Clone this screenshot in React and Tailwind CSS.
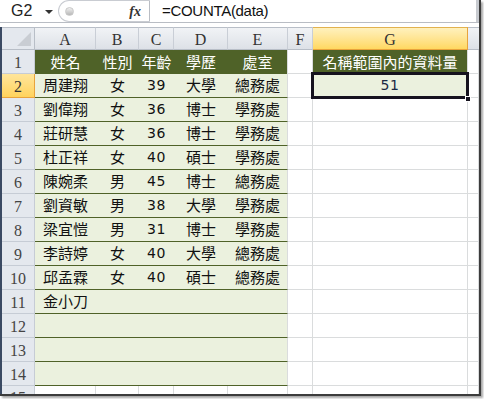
const people = [
  ["周建翔", "女", "39", "大學", "總務處"],
  ["劉偉翔", "女", "36", "博士", "學務處"],
  ["莊研慧", "女", "36", "博士", "學務處"],
  ["杜正祥", "女", "40", "碩士", "學務處"],
  ["陳婉柔", "男", "45", "博士", "總務處"],
  ["劉資敏", "男", "38", "大學", "學務處"],
  ["梁宜愷", "男", "31", "博士", "學務處"],
  ["李詩婷", "女", "40", "大學", "總務處"],
  ["邱孟霖", "女", "40", "碩士", "總務處"],
  ["金小刀", "", "", "", ""],
  ["", "", "", "", ""],
  ["", "", "", "", ""],
  ["", "", "", "", ""],
];

const heads = ["姓名", "性別", "年齡", "學歷", "處室"];
const letters = ["A", "B", "C", "D", "E", "F"];

const cjk = "font-['Noto_Sans_CJK_TC',sans-serif]";
const hdrFont = "font-['Liberation_Serif',serif]";
const numFont = "text-[14px] text-[#1b2a44] font-['DejaVu_Sans',sans-serif] tracking-[0.5px]";

function RowHead({ n, active }) {
  return (
    <div
      className={
        "flex items-center justify-center border-b border-r text-[16px] leading-none pt-[2px] " +
        hdrFont +
        (active
          ? " bg-gradient-to-b from-[#ffe59a] to-[#ffd35c] border-[#e8a33c] text-[#333]"
          : " bg-[#e4e8ee] border-[#c6ccd5] text-[#444]")
      }
    >
      {n}
    </div>
  );
}

function Blank() {
  return <div className="bg-white border-b border-r border-[#dadcdd]" />;
}

export default function App() {
  return (
    <div className="w-[484px] h-[399px] bg-white">
      <div className="w-[481px] h-[396px] border-r-2 border-b-2 border-[#3c3c3c] shadow-[2px_2px_2px_rgba(0,0,0,0.35)] overflow-hidden bg-white">
        {/* formula bar */}
        <div className="flex h-[23px] border-b border-[#b9bdc4]">
          <div className="w-[58px] flex items-center pl-[11px] text-[16px] text-[#222] font-['Liberation_Sans',sans-serif]">
            G2
            <span className="ml-[13px] w-0 h-0 border-l-[4px] border-r-[4px] border-t-[4px] border-l-transparent border-r-transparent border-t-[#333] mt-[1px]" />
          </div>
          <div className="w-[92px] flex items-center rounded-l-full border-l border-t border-b border-[#c9ccd2] border-r border-r-[#b9bdc4] bg-white">
            <span className="ml-[6px] w-[9px] h-[9px] rounded-full bg-gradient-to-b from-[#f0f0f0] to-[#b7b7b7] border border-[#c8c8c8]" />
            <span className="ml-auto mr-[8px] text-[14px] italic font-bold text-[#333] font-['Liberation_Serif',serif]">
              fx
            </span>
          </div>
          <div className="flex-1 flex items-center pl-[12px] text-[15px] text-[#111] font-['Liberation_Sans',sans-serif] tracking-[-0.3px]">
            =COUNTA(data)
          </div>
          <div className="w-[3px] bg-[#c8cbd0]" />
        </div>
        <div className="h-[4px] bg-white" />

        {/* sheet */}
        <div className="grid grid-cols-[33px_61px_43px_35px_54px_60px_25px_155px_11px] grid-rows-[23px_repeat(14,24px)_10px] border-l-2 border-[#3b4a63]">
          {/* column headers */}
          <div className="relative bg-[#e4e8ee] border-t border-r border-b border-[#b8bec7]">
            <svg className="absolute right-[3px] bottom-[3px]" width="14" height="14">
              <polygon points="14,0 14,14 0,14" fill="#c9cdd3" />
            </svg>
          </div>
          {letters.map((l) => (
            <div
              key={l}
              className={"flex items-center justify-center bg-gradient-to-b from-[#f1f3f6] to-[#dde1e7] border-t border-r border-b border-t-[#b8bec7] border-r-[#c9ced6] border-b-[#b8bec7] text-[16px] text-[#333] pt-[2px] " + hdrFont}
            >
              {l}
            </div>
          ))}
          <div className={"flex items-center justify-center bg-gradient-to-b from-[#fff1bd] to-[#ffd860] border-t border-r border-b border-t-[#e2b24f] border-r-[#e8a33c] border-b-[#e8a33c] text-[16px] text-[#333] pt-[2px] " + hdrFont}>
            G
          </div>
          <div className="bg-gradient-to-b from-[#f1f3f6] to-[#dde1e7] border-t border-b border-[#b8bec7]" />

          {/* row 1 */}
          <RowHead n={1} />
          {heads.map((h, i) => (
            <div
              key={h}
              className={"flex items-center justify-center bg-[#4f6228] text-white text-[15px] " + cjk + (i === 4 ? " border-r border-[#dadcdd]" : "")}
            >
              {h}
            </div>
          ))}
          <Blank />
          <div className={"flex items-center justify-center bg-[#4f6228] text-white text-[15px] border-r border-[#dadcdd] " + cjk}>
            名稱範圍內的資料量
          </div>
          <Blank />

          {/* data rows */}
          {people.map((p, r) => (
            <div key={r} className="contents">
              <RowHead n={r + 2} active={r === 0} />
              {p.map((v, c) => (
                <div
                  key={c}
                  className={
                    "flex items-center justify-center bg-[#ebf1de] border-b border-[#4f6228] text-[#111] " +
                    (c === 2 ? numFont : "text-[15px] " + cjk) +
                    (c === 4 ? " border-r border-r-[#dadcdd]" : "")
                  }
                >
                  {v}
                </div>
              ))}
              <Blank />
              {r === 0 ? (
                <div className="relative bg-[#ebf1de] border-r border-[#dadcdd]">
                  <div className={"absolute -left-[2px] -top-[2px] -right-[2px] -bottom-[1px] border-[3px] border-[#15121e] flex items-center justify-center " + numFont}>
                    51
                  </div>
                  <div className="absolute -right-[4px] -bottom-[4px] w-[6px] h-[6px] bg-[#15121e] border border-white" />
                </div>
              ) : (
                <Blank />
              )}
              <Blank />
            </div>
          ))}

          {/* row 15, cut off by the window edge */}
          <div className={"flex items-start justify-center bg-[#e4e8ee] border-r border-[#c6ccd5] text-[16px] leading-none pt-[4px] text-[#444] " + hdrFont}>
            15
          </div>
          {[0, 1, 2, 3, 4, 5, 6, 7].map((i) => (
            <div key={i} className="bg-white border-r border-[#dadcdd]" />
          ))}
        </div>
      </div>
    </div>
  );
}
